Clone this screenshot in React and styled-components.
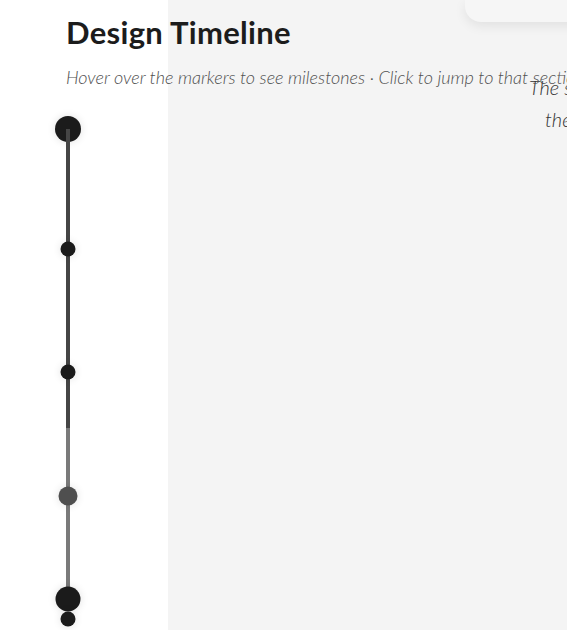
import React from "react";
import styled, { createGlobalStyle } from "styled-components";

const GlobalStyle = createGlobalStyle`
  html, body { margin: 0; padding: 0; }
  body {
    font-family: Lato, "Open Sans", sans-serif;
    background: #ffffff;
    overflow: hidden;
  }
`;

const Page = styled.div`
  position: relative;
  display: grid;
  grid-template-columns: 168px 1fr;
  width: 567px;
  height: 630px;
  overflow: hidden;
`;

const Header = styled.header`
  position: absolute;
  top: 0;
  left: 0;
  z-index: 5;
  padding: 14px 0 0 66px;
  white-space: nowrap;
`;

const Title = styled.h1`
  margin: 0;
  font-size: 31px;
  line-height: 36px;
  font-weight: 700;
  color: #1c1c1c;
  letter-spacing: 0.3px;
`;

const Subtitle = styled.p`
  margin: 17px 0 0;
  font-size: 18px;
  line-height: 20px;
  font-style: italic;
  font-weight: 300;
  color: #505050;
`;

const Rail = styled.aside`
  background: #ffffff;
  padding: 116px 0 0 55px;
`;

const Track = styled.div`
  position: relative;
  width: 26px;
  height: 514px;
`;

const Line = styled.div`
  position: absolute;
  left: 11px;
  top: 13px;
  width: 4px;
  height: 459px;
  background: #7a7a7a;
  z-index: 1;
`;

const Progress = styled.div`
  width: 100%;
  height: 299px;
  background: #454545;
`;

const Marker = styled.button`
  position: absolute;
  left: 50%;
  transform: translate(-50%, -50%);
  padding: 0;
  border: none;
  border-radius: 50%;
  cursor: pointer;
  width: ${(p) => p.$size}px;
  height: ${(p) => p.$size}px;
  background: ${(p) => (p.$muted ? "#4f4f4f" : "#1b1b1b")};
  box-shadow: 0 0 8px rgba(0, 0, 0, 0.12);
  z-index: ${(p) => (p.$under ? 0 : 2)};
`;

const Main = styled.main`
  background: #f4f4f4;
  display: flex;
  flex-direction: column;
  overflow: hidden;
`;

const Card = styled.div`
  height: 22px;
  margin-left: 297px;
  margin-right: -40px;
  background: #f6f6f6;
  border-radius: 0 0 0 16px;
  box-shadow: 0 4px 12px rgba(0, 0, 0, 0.08);
`;

const Quote = styled.div`
  margin-top: 49px;
  font-size: 20px;
  line-height: 32px;
  font-style: italic;
  font-weight: 300;
  color: #333333;
  white-space: nowrap;
`;

const QuoteLine = styled.div`
  padding-left: ${(p) => p.$indent}px;
`;

const markers = [
  { y: 13, size: 26, under: true },
  { y: 133, size: 15 },
  { y: 256, size: 15 },
  { y: 380, size: 19, muted: true },
  { y: 483, size: 25 },
  { y: 503, size: 15 },
];

export default function App() {
  return (
    <>
      <GlobalStyle />
      <Page>
        <Header>
          <Title>Design Timeline</Title>
          <Subtitle>
            Hover over the markers to see milestones · Click to jump to that section
          </Subtitle>
        </Header>
        <Rail>
          <Track>
            <Line>
              <Progress />
            </Line>
            {markers.map((m, i) => (
              <Marker
                key={i}
                aria-label={`Milestone ${i + 1}`}
                $size={m.size}
                $muted={m.muted}
                $under={m.under}
                style={{ top: m.y }}
              />
            ))}
          </Track>
        </Rail>
        <Main>
          <Card />
          <Quote>
            <QuoteLine $indent={361}>The story of design begins</QuoteLine>
            <QuoteLine $indent={377}>there, in the first sketch</QuoteLine>
          </Quote>
        </Main>
      </Page>
    </>
  );
}
